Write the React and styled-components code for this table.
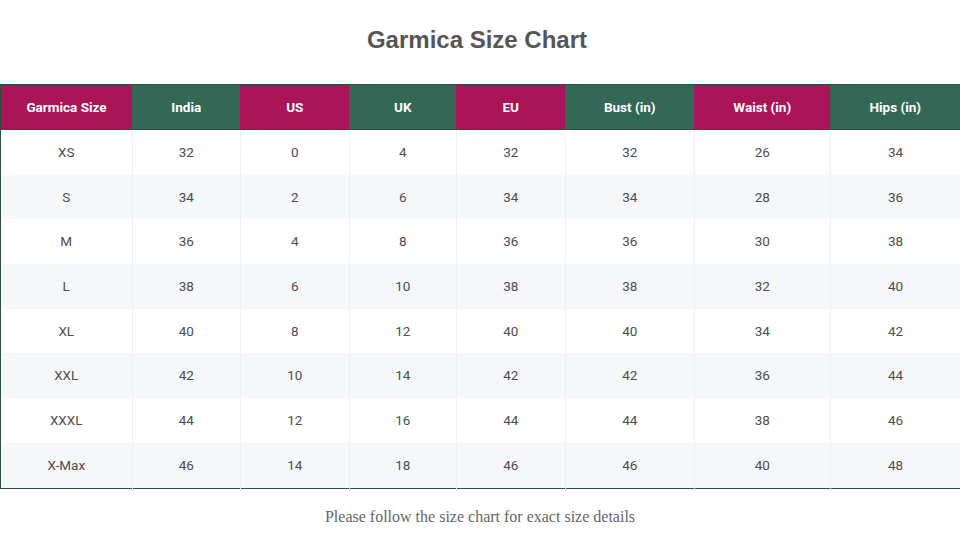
import React from 'react'
import styled, { createGlobalStyle } from 'styled-components'

const GlobalStyle = createGlobalStyle`
  html, body {
    margin: 0;
    padding: 0;
    background: #fff;
  }
`

const columns = [
  { label: 'Garmica Size', width: 132, tone: 'berry' },
  { label: 'India', width: 108, tone: 'pine' },
  { label: 'US', width: 109, tone: 'berry' },
  { label: 'UK', width: 107, tone: 'pine' },
  { label: 'EU', width: 109, tone: 'berry' },
  { label: 'Bust (in)', width: 129, tone: 'pine' },
  { label: 'Waist (in)', width: 136, tone: 'berry' },
  { label: 'Hips (in)', width: 130, tone: 'pine' },
]

const rows = [
  ['XS', 32, 0, 4, 32, 32, 26, 34],
  ['S', 34, 2, 6, 34, 34, 28, 36],
  ['M', 36, 4, 8, 36, 36, 30, 38],
  ['L', 38, 6, 10, 38, 38, 32, 40],
  ['XL', 40, 8, 12, 40, 40, 34, 42],
  ['XXL', 42, 10, 14, 42, 42, 36, 44],
  ['XXXL', 44, 12, 16, 44, 44, 38, 46],
  ['X-Max', 46, 14, 18, 46, 46, 40, 48],
]

const tones = {
  berry: '#a91556',
  pine: '#336756',
}

const Page = styled.div`
  width: 960px;
  height: 540px;
  display: flex;
  flex-direction: column;
  align-items: center;
  overflow: hidden;
`

const Title = styled.h1`
  margin: 25px 6px 0 0;
  height: 30px;
  font-family: "Liberation Sans", Arial, sans-serif;
  font-size: 24px;
  font-weight: 700;
  line-height: 30px;
  color: #555;
`

const Table = styled.table`
  margin-top: 29px;
  width: 960px;
  table-layout: fixed;
  border-collapse: collapse;
  border-top: 1px solid #2b4f40;
  border-bottom: 1px solid #2b4f40;
  border-left: 1px solid #2b4f40;
  font-family: Roboto, "Liberation Sans", sans-serif;
  font-size: 13.5px;
`

const HeadCell = styled.th`
  height: 43px;
  padding: 0 0 1px;
  background: ${p => tones[p.$tone]};
  color: #fff;
  font-weight: 700;
  text-align: center;
  border-bottom: 1px solid #2b4f40;
`

const Row = styled.tr`
  background: ${p => (p.$odd ? '#f6f7f9' : '#fff')};
`

const Cell = styled.td`
  height: 43.7px;
  padding: 0 0 1px;
  text-align: center;
  color: #4d4d4d;
  border-right: 1px solid #eef0f2;

  &:last-child {
    border-right: none;
  }
`

const Note = styled.p`
  margin: 19px 0 0;
  font-family: "Liberation Serif", "Times New Roman", serif;
  font-size: 16px;
  color: #666;
`

export default function App() {
  return (
    <>
      <GlobalStyle />
      <Page>
        <Title>Garmica Size Chart</Title>
        <Table>
          <colgroup>
            {columns.map(c => (
              <col key={c.label} style={{ width: c.width }} />
            ))}
          </colgroup>
          <thead>
            <tr>
              {columns.map(c => (
                <HeadCell key={c.label} $tone={c.tone}>{c.label}</HeadCell>
              ))}
            </tr>
          </thead>
          <tbody>
            {rows.map((r, i) => (
              <Row key={r[0]} $odd={i % 2 === 1}>
                {r.map((v, j) => (
                  <Cell key={j}>{v}</Cell>
                ))}
              </Row>
            ))}
          </tbody>
        </Table>
        <Note>Please follow the size chart for exact size details</Note>
      </Page>
    </>
  )
}
